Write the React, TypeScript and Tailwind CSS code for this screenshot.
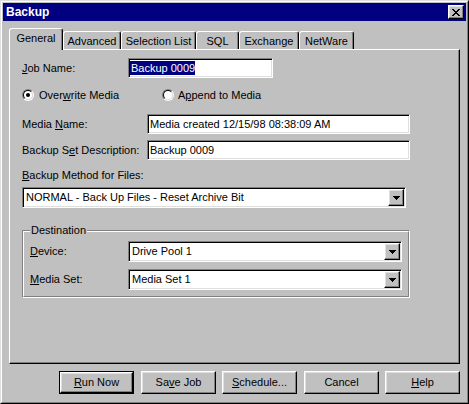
import React from "react";

const raised =
  "border border-t-white border-l-white border-r-black border-b-black shadow-[inset_-1px_-1px_#808080,inset_1px_1px_#dfdfdf] bg-[#c0c0c0]";
const sunken =
  "border border-t-[#808080] border-l-[#808080] border-r-white border-b-white shadow-[inset_1px_1px_black,inset_-1px_-1px_#dfdfdf] bg-white p-[1px]";

function CloseX() {
  const rows = ["11000011", "01100110", "00111100", "00011000", "00111100", "01100110", "11000011"];
  return (
    <svg width="8" height="7" viewBox="0 0 8 7" shapeRendering="crispEdges">
      {rows.map((r, y) =>
        r.split("").map((c, x) => (c === "1" ? <rect key={x + "-" + y} x={x} y={y} width="1" height="1" fill="black" /> : null))
      )}
    </svg>
  );
}

function Arrow() {
  return (
    <svg width="7" height="4" viewBox="0 0 7 4" shapeRendering="crispEdges">
      <rect x="0" y="0" width="7" height="1" fill="black" />
      <rect x="1" y="1" width="5" height="1" fill="black" />
      <rect x="2" y="2" width="3" height="1" fill="black" />
      <rect x="3" y="3" width="1" height="1" fill="black" />
    </svg>
  );
}

function Combo({ text, w }: { text: string; w: string }) {
  return (
    <div className={`${sunken} ${w} h-[21px] flex items-center`}>
      <div className="flex-1 pl-[2px] leading-[17px] whitespace-nowrap overflow-hidden">{text}</div>
      <div className={`${raised} w-[16px] h-[17px] flex items-center justify-center`}>
        <Arrow />
      </div>
    </div>
  );
}

function Radio({ checked }: { checked?: boolean }) {
  return (
    <div className="w-[12px] h-[12px] rounded-full border border-t-[#808080] border-l-[#808080] border-r-white border-b-white">
      <div className="w-full h-full rounded-full border border-t-black border-l-black border-r-[#dfdfdf] border-b-[#dfdfdf] bg-white flex items-center justify-center">
        {checked && <div className="w-[4px] h-[4px] rounded-full bg-black" />}
      </div>
    </div>
  );
}

function Tab({ label, w, selected }: { label: string; w: string; selected?: boolean }) {
  return (
    <div
      className={
        selected
          ? `${w} h-[22px] mb-[-1px] relative z-10 bg-[#c0c0c0] border-t border-l border-r border-t-white border-l-white border-r-black rounded-t-[3px] shadow-[inset_-1px_0_#808080] flex items-center justify-center pb-[2px]`
          : `${w} h-[18px] bg-[#c0c0c0] border-t border-l border-r border-t-white border-l-white border-r-black rounded-t-[3px] shadow-[inset_-1px_0_#808080] flex items-center justify-center pt-[1px]`
      }
    >
      {label}
    </div>
  );
}

function Btn({ children, def, cls }: { children: React.ReactNode; def?: boolean; cls?: string }) {
  if (def) {
    return (
      <div className={`w-[75px] h-[23px] border border-black ${cls ?? ""}`}>
        <div className={`${raised} w-full h-full flex items-center justify-center`}>{children}</div>
      </div>
    );
  }
  return <div className={`${raised} w-[75px] h-[23px] flex items-center justify-center ${cls ?? ""}`}>{children}</div>;
}

export default function App() {
  return (
    <div className="w-[469px] h-[404px] bg-[#c0c0c0] border border-t-[#dfdfdf] border-l-[#dfdfdf] border-r-black border-b-black font-['Liberation_Sans',Arial,sans-serif] text-[11px] text-black select-none">
      <div className="h-full border border-t-white border-l-white border-r-[#808080] border-b-[#808080] p-[1px] flex flex-col">
        {/* Title bar */}
        <div className="h-[18px] bg-[#000080] flex items-center justify-between pl-[3px] pr-[2px]">
          <span className="text-white font-bold text-[12px] leading-[18px]">Backup</span>
          <div className={`${raised} w-[16px] h-[14px] flex items-center justify-center pr-[1px]`}>
            <CloseX />
          </div>
        </div>

        {/* Tabs */}
        <div className="mt-[7px] h-[21px] flex items-end pl-[6px]">
          <Tab label="General" w="w-[54px]" selected />
          <Tab label="Advanced" w="w-[58px]" />
          <Tab label="Selection List" w="w-[75px]" />
          <Tab label="SQL" w="w-[43px]" />
          <Tab label="Exchange" w="w-[60px]" />
          <Tab label="NetWare" w="w-[55px]" />
        </div>

        {/* Panel */}
        <div className="mx-[6px] h-[315px] border border-t-white border-l-white border-r-black border-b-black shadow-[inset_-1px_-1px_#808080] flex flex-col pl-[12px]">
          <div className="mt-[8px] h-[20px] flex items-center">
            <div className="w-[106px]">
              <u>J</u>ob Name:
            </div>
            <div className={`${sunken} w-[145px] h-[20px] flex items-center`}>
              <span className="bg-[#000080] text-white leading-[14px] pl-[1px]">Backup 0009</span>
            </div>
          </div>

          <div className="mt-[8px] h-[18px] flex items-center">
            <div className="w-[140px] flex items-center gap-[5px]">
              <Radio checked />
              <span>
                Over<u>w</u>rite Media
              </span>
            </div>
            <div className="flex items-center gap-[4px]">
              <Radio />
              <span>
                A<u>p</u>pend to Media
              </span>
            </div>
          </div>

          <div className="mt-[10px] h-[20px] flex items-center">
            <div className="w-[125px]">
              Media <u>N</u>ame:
            </div>
            <div className={`${sunken} w-[263px] h-[20px] flex items-center pl-[2px]`}>Media created 12/15/98 08:38:09 AM</div>
          </div>

          <div className="mt-[6px] h-[20px] flex items-center">
            <div className="w-[125px]">
              Backup S<u>e</u>t Description:
            </div>
            <div className={`${sunken} w-[263px] h-[20px] flex items-center pl-[2px]`}>Backup 0009</div>
          </div>

          <div className="mt-[8px] h-[14px] leading-[14px]">
            <u>B</u>ackup Method for Files:
          </div>
          <div className="mt-[5px]">
            <Combo text="NORMAL - Back Up Files - Reset Archive Bit" w="w-[384px]" />
          </div>

          {/* Group box */}
          <div className="mt-[22px] w-[388px] h-[68px] relative border border-t-[#808080] border-l-[#808080] border-r-white border-b-white">
            <span className="absolute left-[7px] top-[-8px] px-[1px] leading-[14px] bg-[#c0c0c0]">Destination</span>
            <div className="h-full border border-t-white border-l-white border-r-[#808080] border-b-[#808080] flex flex-col pl-[6px]">
              <div className="mt-[9px] flex items-center">
                <div className="w-[98px]">
                  <u>D</u>evice:
                </div>
                <Combo text="Drive Pool 1" w="w-[274px]" />
              </div>
              <div className="mt-[7px] flex items-center">
                <div className="w-[98px]">
                  <u>M</u>edia Set:
                </div>
                <Combo text="Media Set 1" w="w-[274px]" />
              </div>
            </div>
          </div>
        </div>

        {/* Buttons */}
        <div className="mt-[7px] h-[23px] flex pl-[56px]">
          <Btn def>
            <span>
              <u>R</u>un Now
            </span>
          </Btn>
          <Btn cls="ml-[7px]">
            <span>
              Sa<u>v</u>e Job
            </span>
          </Btn>
          <Btn cls="ml-[6px]">
            <span>
              <u>S</u>chedule...
            </span>
          </Btn>
          <Btn cls="ml-[7px]">
            <span>Cancel</span>
          </Btn>
          <Btn cls="ml-[6px]">
            <span>
              <u>H</u>elp
            </span>
          </Btn>
        </div>
      </div>
    </div>
  );
}
